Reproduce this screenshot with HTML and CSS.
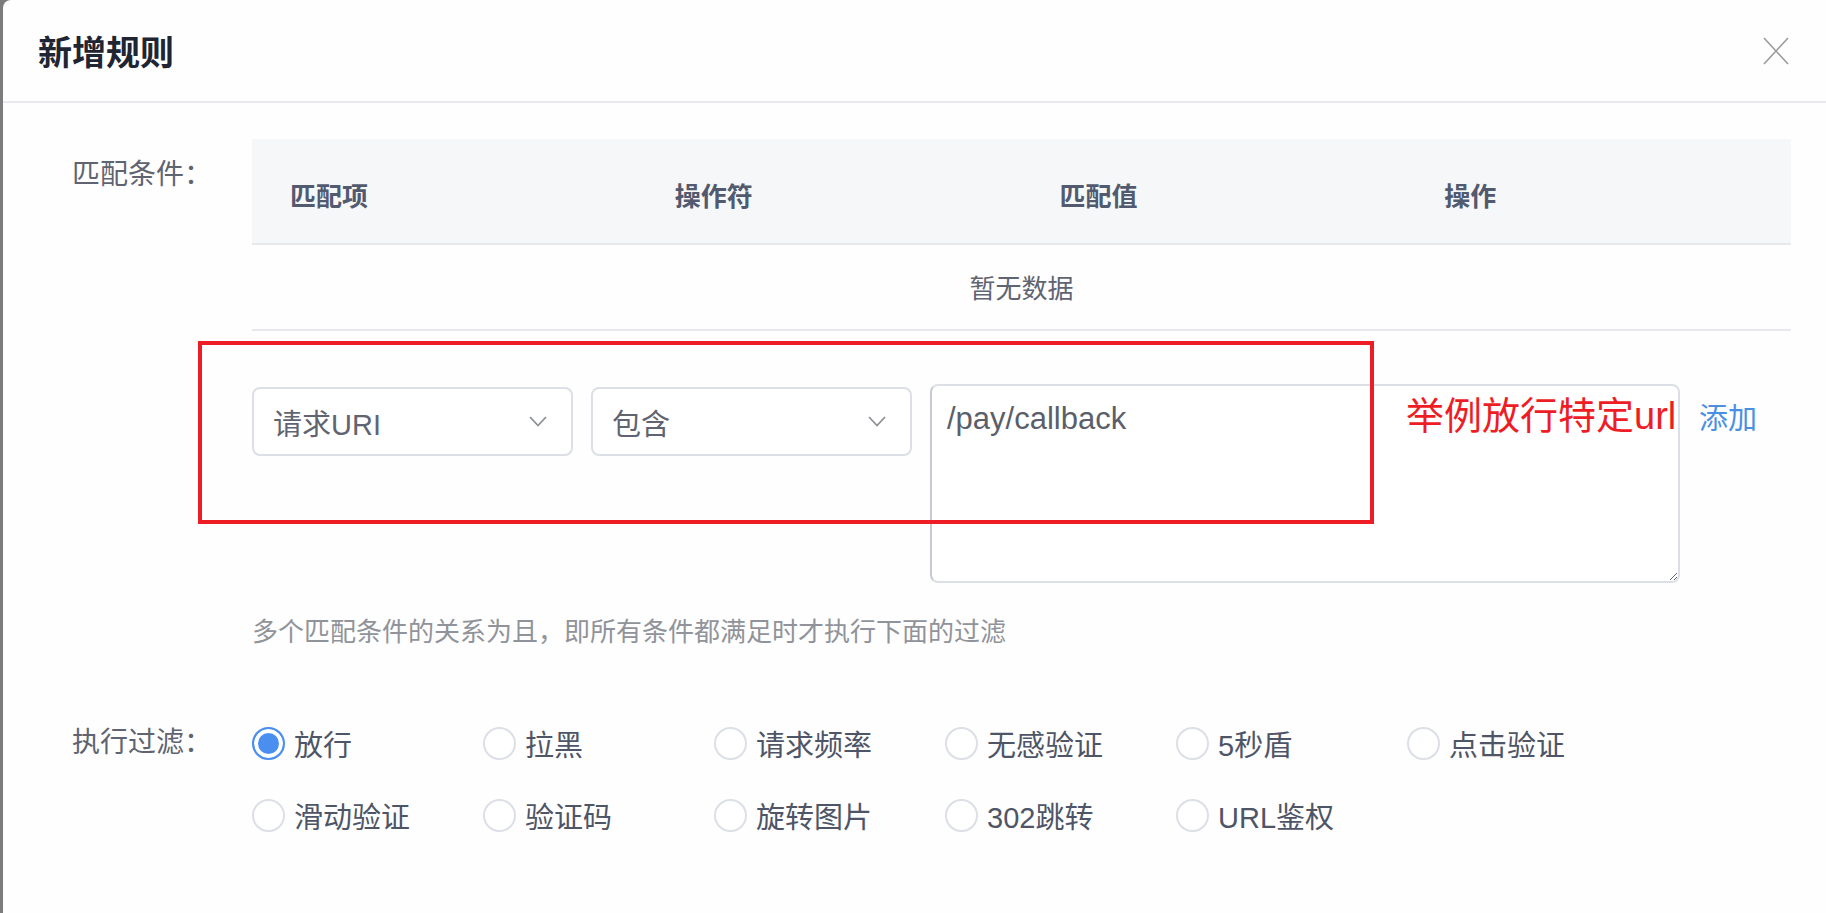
FILE: index.html
```html
<!DOCTYPE html>
<html lang="zh-CN">
<head>
    <meta charset="UTF-8">
    <meta name="viewport" content="width=device-width, initial-scale=1.0">
    <title>新增规则</title>
    <link rel="stylesheet" href="styles.css">
</head>
<body>
    <div class="dialog">
        <div class="dialog-header">
            <span class="dialog-title">新增规则</span>
            <button class="dialog-close" type="button">
                <svg width="26" height="28" viewBox="0 0 26 28">
                    <path d="M1 1 L25 27 M25 1 L1 27" stroke="#9b9b9b" stroke-width="1.6" fill="none"/>
                </svg>
            </button>
        </div>

        <div class="dialog-body">
            <div class="form-item">
                <label class="form-label">匹配条件：</label>
                <div class="form-content">
                    <div class="match-table">
                        <div class="match-head">
                            <span>匹配项</span>
                            <span>操作符</span>
                            <span>匹配值</span>
                            <span>操作</span>
                        </div>
                        <div class="match-empty">暂无数据</div>
                    </div>

                    <div class="cond-row">
                        <div class="select">
                            <span>请求URI</span>
                            <svg width="18" height="11" viewBox="0 0 18 11">
                                <polyline points="1,1 9,9.5 17,1" stroke="#8e9196" stroke-width="1.8" fill="none"/>
                            </svg>
                        </div>
                        <div class="select">
                            <span>包含</span>
                            <svg width="18" height="11" viewBox="0 0 18 11">
                                <polyline points="1,1 9,9.5 17,1" stroke="#8e9196" stroke-width="1.8" fill="none"/>
                            </svg>
                        </div>
                        <textarea class="cond-value">/pay/callback</textarea>
                        <a class="add-link" href="#">添加</a>

                        <!-- annotation overlay -->
                        <div class="mark-box"></div>
                        <div class="mark-note">举例放行特定url</div>
                    </div>

                    <div class="form-tip">多个匹配条件的关系为且，即所有条件都满足时才执行下面的过滤</div>
                </div>
            </div>

            <div class="form-item filter-item">
                <label class="form-label">执行过滤：</label>
                <div class="form-content radio-group">
                    <label class="radio checked"><span class="radio-dot"></span>放行</label>
                    <label class="radio"><span class="radio-dot"></span>拉黑</label>
                    <label class="radio"><span class="radio-dot"></span>请求频率</label>
                    <label class="radio"><span class="radio-dot"></span>无感验证</label>
                    <label class="radio"><span class="radio-dot"></span>5秒盾</label>
                    <label class="radio"><span class="radio-dot"></span>点击验证</label>
                    <label class="radio"><span class="radio-dot"></span>滑动验证</label>
                    <label class="radio"><span class="radio-dot"></span>验证码</label>
                    <label class="radio"><span class="radio-dot"></span>旋转图片</label>
                    <label class="radio"><span class="radio-dot"></span>302跳转</label>
                    <label class="radio"><span class="radio-dot"></span>URL鉴权</label>
                </div>
            </div>
        </div>
    </div>
</body>
</html>
```

FILE: styles.css
```css
html, body {
    margin: 0;
    padding: 0;
    height: 100%;
}
body {
    background-color: #7c7c7c;
    font-family: "Liberation Sans", "Noto Sans CJK SC", sans-serif;
    color: #606266;
    overflow: hidden;
}
.dialog {
    margin-left: 3px;
    min-height: 100%;
    background-color: #fefefe;
    border-top-left-radius: 8px;
}
.dialog-header {
    display: flex;
    align-items: center;
    justify-content: space-between;
    height: 101px;
    padding: 0 37px 0 35px;
    border-bottom: 2px solid #e9eaee;
}
.dialog-title {
    font-size: 34px;
    font-weight: 600;
    color: #1f2533;
}
.dialog-close {
    border: none;
    background: none;
    padding: 0;
    display: flex;
    cursor: pointer;
}
.dialog-body {
    padding: 36px 35px 0 0;
}
.form-item {
    display: flex;
    align-items: flex-start;
}
.form-label {
    width: 249px;
    flex-shrink: 0;
    box-sizing: border-box;
    padding-left: 69px;
    font-size: 28px;
    line-height: 72px;
    color: #5f6470;
}
.form-content {
    flex: 1;
    min-width: 0;
}
.match-head {
    display: grid;
    grid-template-columns: repeat(4, 1fr);
    align-items: center;
    height: 98px;
    padding-top: 6px;
    background-color: #f6f7f9;
    border-bottom: 2px solid #e6e8eb;
    font-size: 26px;
    font-weight: 600;
    color: #515a6e;
}
.match-head span {
    padding-left: 38px;
}
.match-empty {
    height: 80px;
    padding-top: 4px;
    line-height: 80px;
    text-align: center;
    font-size: 26px;
    color: #5f6470;
    border-bottom: 2px solid #e6e8eb;
}
.cond-row {
    position: relative;
    display: flex;
    align-items: flex-start;
    gap: 18px;
    margin-top: 53px;
}
.select {
    display: flex;
    align-items: center;
    justify-content: space-between;
    box-sizing: border-box;
    width: 321px;
    height: 69px;
    margin-top: 3px;
    padding: 0 24px 0 19px;
    border: 2px solid #dcdfe6;
    border-radius: 8px;
    background-color: #fff;
    font-size: 29px;
    color: #5f6470;
}
.cond-value {
    box-sizing: border-box;
    width: 750px;
    height: 199px;
    padding: 10px 15px;
    border: 2px solid #dcdfe6;
    border-left-color: #c8cad0;
    border-radius: 8px;
    font-family: "Liberation Sans", "Noto Sans CJK SC", sans-serif;
    font-size: 31px;
    line-height: 45px;
    color: #5a5f6b;
    resize: vertical;
    outline: none;
}
.add-link {
    margin-left: 1px;
    font-size: 29px;
    line-height: 70px;
    color: #4a90e2;
    text-decoration: none;
}
.mark-box {
    position: absolute;
    left: -54px;
    top: -43px;
    width: 1168px;
    height: 175px;
    border: 4px solid #ee1d25;
    pointer-events: none;
}
.mark-note {
    position: absolute;
    left: 1154px;
    top: 13px;
    font-size: 38px;
    line-height: 38px;
    color: #ee1d25;
    white-space: nowrap;
}
.form-tip {
    margin-top: 31px;
    font-size: 26px;
    line-height: 36px;
    color: #909399;
}
.filter-item {
    margin-top: 57px;
}
.radio-group {
    display: grid;
    grid-template-columns: repeat(6, 231px);
    grid-auto-rows: 72px;
}
.radio {
    display: flex;
    align-items: center;
    gap: 9px;
    font-size: 29px;
    color: #4e5566;
    cursor: pointer;
}
.radio-dot {
    box-sizing: border-box;
    width: 33px;
    height: 33px;
    border: 2px solid #dcdfe6;
    border-radius: 50%;
    background-color: #fff;
}
.radio.checked .radio-dot {
    border-color: #4a8ef0;
    background-color: #4a8ef0;
    box-shadow: inset 0 0 0 4px #fff;
}
```
